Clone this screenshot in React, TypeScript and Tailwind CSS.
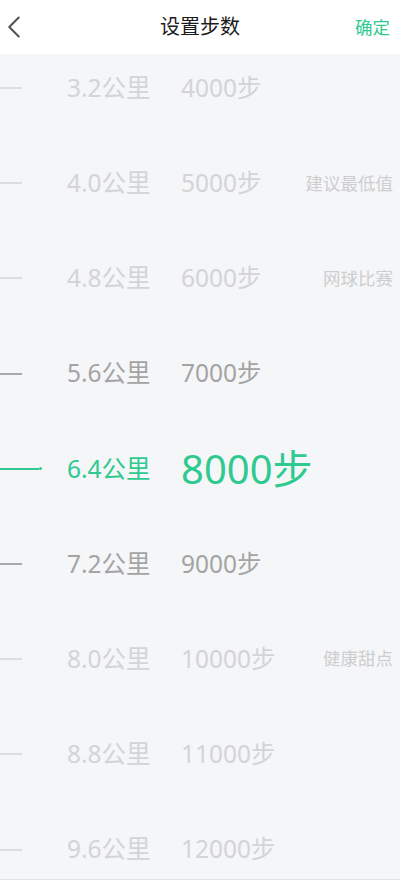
import { ChevronLeft } from 'lucide-react'

type Row = {
  km: string
  steps: string
  tag?: string
  level: 'far' | 'near' | 'active'
}

const rows: Row[] = [
  { km: '3.2公里', steps: '4000步', level: 'far' },
  { km: '4.0公里', steps: '5000步', tag: '建议最低值', level: 'far' },
  { km: '4.8公里', steps: '6000步', tag: '网球比赛', level: 'far' },
  { km: '5.6公里', steps: '7000步', level: 'near' },
  { km: '6.4公里', steps: '8000步', level: 'active' },
  { km: '7.2公里', steps: '9000步', level: 'near' },
  { km: '8.0公里', steps: '10000步', tag: '健康甜点', level: 'far' },
  { km: '8.8公里', steps: '11000步', level: 'far' },
  { km: '9.6公里', steps: '12000步', level: 'far' },
]

function StepRow({ row }: { row: Row }) {
  const active = row.level === 'active'
  const near = row.level === 'near'
  return (
    <div className="flex h-[95.2px] items-center">
      {/* 刻度 */}
      <div className="flex w-[67px] shrink-0 items-center">
        {active ? (
          <div className="flex items-center">
            <div className="h-[2px] w-[39px] bg-[#30c990]" />
            <div className="h-[3px] w-[3px] rounded-full bg-[#30c990]" />
          </div>
        ) : (
          <div className={`h-[2px] w-[22px] ${near ? 'bg-[#a9a9a9]' : 'bg-[#dcdddf]'}`} />
        )}
      </div>
      <div
        className={`w-[114px] shrink-0 text-[24.5px] leading-none ${
          active ? 'text-[#30c990]' : near ? 'text-[#a4a4a4]' : 'text-[#d3d4d6]'
        }`}
      >
        {row.km}
      </div>
      <div
        className={`flex-1 leading-none ${
          active ? 'text-[40px] text-[#30c990]' : near ? 'text-[24.5px] text-[#a4a4a4]' : 'text-[24.5px] text-[#d3d4d6]'
        }`}
      >
        {row.steps}
      </div>
      {row.tag && <div className="pr-[7px] text-[17.5px] leading-none text-[#cdcecf]">{row.tag}</div>}
    </div>
  )
}

export default function App() {
  return (
    <div
      className="h-[883px] w-[400px] overflow-hidden bg-white"
      style={{ fontFamily: '"Noto Sans", "Noto Sans CJK SC", sans-serif' }}
    >
      {/* 顶栏 */}
      <div className="relative flex h-[54px] items-center justify-center">
        <ChevronLeft className="absolute -left-[5px] top-[8px] h-[38px] w-[38px] text-[#555]" strokeWidth={1.3} />
        <div className="text-[20px] text-[#1c1c1c]">设置步数</div>
        <div className="absolute right-[10px] top-[15px] text-[17.5px] leading-[24px] text-[#30c990]">确定</div>
      </div>

      {/* 步数滚轮 */}
      <div className="h-[826px] overflow-hidden border-b border-b-[#e1e2e4] bg-[#f5f6f8]">
        <div className="-mt-[13.5px]">
          {rows.map((row) => (
            <StepRow key={row.km} row={row} />
          ))}
        </div>
      </div>
    </div>
  )
}
